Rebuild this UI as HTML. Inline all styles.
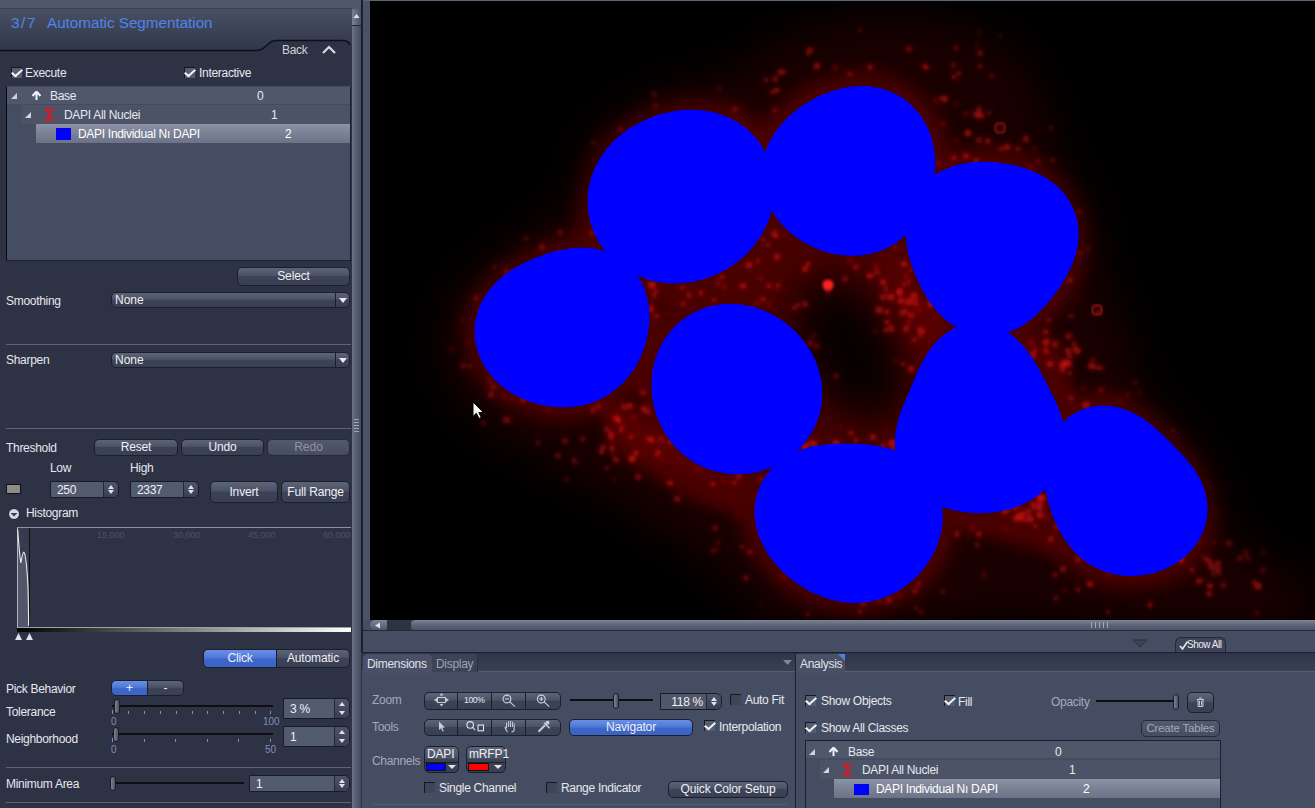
<!DOCTYPE html>
<html><head><meta charset="utf-8">
<style>
*{box-sizing:border-box;margin:0;padding:0}
html,body{width:1315px;height:808px;overflow:hidden;background:#2d3245;font-family:"Liberation Sans",sans-serif;font-size:12px;color:#e6e8ef}
.a{position:absolute}
.t{position:absolute;white-space:nowrap;line-height:14px;letter-spacing:-0.3px}
.btn{position:absolute;border:1px solid #1b1f2b;border-radius:5px;background:linear-gradient(#5d6478 0%,#4b5266 45%,#3d4356 50%,#3a4053 100%);color:#eef0f5;text-align:center;white-space:nowrap;letter-spacing:-0.15px}
.btnd{position:absolute;border:1px solid #252a38;border-radius:5px;background:linear-gradient(#535a6d 0%,#4d5367 50%,#474d60 100%);color:#8d93a3;text-align:center;white-space:nowrap}
.blue{background:linear-gradient(#6a90e6 0%,#4f78d8 45%,#3e66c9 55%,#3c63c6 100%)}
.dd{position:absolute;border:1px solid #1b1f2b;border-radius:5px;background:linear-gradient(#5d6478 0%,#4b5266 45%,#3d4356 50%,#3a4053 100%);color:#eef0f5;padding-left:3px;line-height:14px}
.dd i{position:absolute;right:0;top:0;bottom:0;width:14px;border-left:1px solid #1b1f2b}
.dd i:after{content:"";position:absolute;left:3px;top:5px;border-left:4px solid transparent;border-right:4px solid transparent;border-top:5px solid #e8eaf0}
.spin{position:absolute;border:1px solid #181b26;border-radius:0 6px 6px 0;background:#525a6e;color:#eef0f5}
.spin b{position:absolute;right:0;top:0;bottom:0;width:15px;border-left:1px solid #22263a;border-radius:0 6px 6px 0;background:linear-gradient(#4e5568,#3a4053)}
.spin b:before{content:"";position:absolute;left:4px;top:3px;border-left:3px solid transparent;border-right:3px solid transparent;border-bottom:4px solid #e0e3ea}
.spin b:after{content:"";position:absolute;left:4px;bottom:3px;border-left:3px solid transparent;border-right:3px solid transparent;border-top:4px solid #e0e3ea}
.cb{position:absolute;width:11px;height:11px;border-top:1px solid #14171f;border-left:1px solid #14171f;background:#565d71}
.cb.on:after{content:"";position:absolute;left:2px;top:-1px;width:4px;height:8px;border-right:2px solid #f4f5f8;border-bottom:2px solid #f4f5f8;transform:rotate(40deg) skewX(-8deg);transform-origin:50% 50%}
.sep{position:absolute;height:1px;background:#5e6578}
.lab{color:#a3aabb}
</style></head><body>
<!-- LEFT PANEL -->
<div class="a" style="left:0;top:0;width:352px;height:808px;background:#2d3245"></div>
<div class="a" style="left:0;top:0;width:352px;height:8px;background:#50576a"></div>
<div class="a" style="left:0;top:8px;width:352px;height:1px;background:#3c4254"></div>
<div class="a" style="left:0;top:9px;width:352px;height:42px;background:linear-gradient(#4a5064,#30364a)"></div>
<svg class="a" style="left:0;top:38px" width="352" height="16"><path d="M0 12.5 H257 C266 12.5 267 2.5 276 2.5 H342 Q349 2.5 350 7 V16 H0Z" fill="#2d3245"/><path d="M0 12.5 H257 C266 12.5 267 2.5 276 2.5 H342 Q349 2.5 350 7" fill="none" stroke="#0e1017" stroke-width="1.5"/></svg>
<div class="t" style="left:11px;top:14px;font-size:15.5px;line-height:18px;color:#4d84ea;letter-spacing:1.5px">3/7</div><div class="t" style="left:47px;top:14px;font-size:15.3px;line-height:18px;color:#4d84ea;letter-spacing:-0.05px">Automatic Segmentation</div>
<div class="t" style="left:282px;top:43px;color:#cdd1dc">Back</div>
<svg class="a" style="left:321px;top:44px" width="16" height="11"><path d="M2 9 L8 3 L14 9" fill="none" stroke="#d8dbe4" stroke-width="2.2"/></svg>

<div class="cb on" style="left:11px;top:67px"></div>
<div class="t" style="left:25px;top:66px">Execute</div>
<div class="cb on" style="left:184px;top:67px"></div>
<div class="t" style="left:199px;top:66px">Interactive</div>

<!-- tree -->
<div class="a" style="left:6px;top:86px;width:345px;height:175px;background:#454d62;border:1px solid #1c202c;border-left-color:#08090d;border-top-color:#454d62"></div>
<div class="a" style="left:7px;top:87px;width:343px;height:18px;background:#50576b;border-bottom:1px solid #454b5e"></div>
<div class="a" style="left:22px;top:105px;width:328px;height:19px;background:#4c5367"></div>
<div class="a" style="left:36px;top:124px;width:314px;height:19px;background:linear-gradient(#8d93a5,#7a8195 50%,#6c7387)"></div>
<svg class="a" style="left:10px;top:91px" width="8" height="9"><path d="M1 8 L7 8 L7 2Z" fill="#d0d4de"/></svg>
<svg class="a" style="left:31px;top:90px" width="11" height="11"><path d="M5.5 1.5 L1.5 6 M5.5 1.5 L9.5 6 M5.5 2 V10" fill="none" stroke="#f0f2f6" stroke-width="2"/></svg>
<div class="t" style="left:50px;top:89px">Base</div>
<div class="t" style="left:257px;top:89px">0</div>
<svg class="a" style="left:24px;top:110px" width="8" height="9"><path d="M1 8 L7 8 L7 2Z" fill="#d0d4de"/></svg>
<svg class="a" style="left:44px;top:107px" width="12" height="15"><path d="M10.5 2.5 H2 L7 7.5 L2 12.5 H10.5" fill="none" stroke="#e8141a" stroke-width="1.8"/></svg>
<div class="t" style="left:64px;top:108px">DAPI All Nuclei</div>
<div class="t" style="left:271px;top:108px">1</div>
<div class="a" style="left:56px;top:128px;width:15px;height:12px;background:#0000ff"></div>
<div class="t" style="left:78px;top:127px;color:#fff">DAPI Individual Nı DAPI</div>
<div class="t" style="left:285px;top:127px;color:#fff">2</div>

<div class="btn" style="left:237px;top:267px;width:113px;height:19px;line-height:16px">Select</div>
<div class="t" style="left:6px;top:294px">Smoothing</div>
<div class="dd" style="left:111px;top:292px;width:239px;height:16px">None<i></i></div>
<div class="sep" style="left:6px;top:344px;width:345px"></div>
<div class="t" style="left:6px;top:353px">Sharpen</div>
<div class="dd" style="left:111px;top:352px;width:239px;height:16px">None<i></i></div>
<div class="sep" style="left:6px;top:428px;width:345px"></div>

<div class="t" style="left:6px;top:441px">Threshold</div>
<div class="btn" style="left:94px;top:439px;width:84px;height:17px;line-height:15px">Reset</div>
<div class="btn" style="left:181px;top:439px;width:83px;height:17px;line-height:15px">Undo</div>
<div class="btnd" style="left:267px;top:439px;width:83px;height:17px;line-height:15px">Redo</div>
<div class="t" style="left:50px;top:461px">Low</div>
<div class="t" style="left:130px;top:461px">High</div>
<div class="a" style="left:6px;top:484px;width:15px;height:10px;background:#8c8c8c;border:1px solid #111"></div>
<div class="spin" style="left:50px;top:481px;width:69px;height:17px"><span class="t" style="left:6px;top:1px">250</span><b></b></div>
<div class="spin" style="left:130px;top:481px;width:69px;height:17px"><span class="t" style="left:6px;top:1px">2337</span><b></b></div>
<div class="btn" style="left:210px;top:481px;width:68px;height:22px;line-height:20px">Invert</div>
<div class="btn" style="left:281px;top:481px;width:69px;height:22px;line-height:20px">Full Range</div>
<svg class="a" style="left:7px;top:507px" width="14" height="14"><circle cx="7" cy="7" r="5.5" fill="#d6d9e1" stroke="#1c202b" stroke-width="1"/><path d="M3.5 6 H10.5 L7 9.5Z" fill="#3a4053"/></svg>
<div class="t" style="left:26px;top:506px">Histogram</div>

<!-- histogram -->
<div class="a" style="left:17px;top:527px;width:334px;height:101px;background:#2d3245;border-top:1px solid #8d93a3;border-left:1px solid #b0b5c2"></div>
<div class="a" style="left:18px;top:528px;width:11px;height:99px;background:#363c4f"></div>
<div class="a" style="left:29px;top:528px;width:1px;height:99px;background:#111"></div>
<svg class="a" style="left:17px;top:527px" width="334" height="101">
<g stroke="#30364a" stroke-width="1"><path d="M77.5 1 V100 M153.5 1 V100 M228.5 1 V100 M304.5 1 V100 M13 21.5 H334 M13 41.5 H334 M13 60.5 H334 M13 80.5 H334"/></g>
<g fill="#4c5366" font-family="Liberation Sans" font-size="9"><text x="80" y="11">15,000</text><text x="156" y="11">30,000</text><text x="231" y="11">45,000</text><text x="306" y="11">60,000</text></g>
<path d="M1 2.5 C1.5 12 2.5 30 3.9 36 C4.8 30 5.8 25 6.8 25 C8.5 27 10 40 11 60 C11.5 80 11.6 90 11.6 100 H1Z" fill="#50576b"/><path d="M0.7 2.5 C1.5 12 2.5 30 3.9 36 C4.8 30 5.8 25 6.8 25 C8.5 27 10 40 11 60 C11.5 80 11.6 90 11.6 99" fill="none" stroke="#e8eaef" stroke-width="1.1"/>
</svg>
<div class="a" style="left:17px;top:627px;width:334px;height:1px;background:#9aa0ae"></div><div class="a" style="left:17px;top:628px;width:334px;height:4px;background:linear-gradient(90deg,#000,#fff)"></div>
<svg class="a" style="left:14px;top:632px" width="22" height="9"><path d="M1 8 L4.5 1 L8 8Z M12 8 L15.5 1 L19 8Z" fill="#e0e3ea"/></svg>

<div class="btn blue" style="left:203px;top:649px;width:74px;height:19px;line-height:17px;border-radius:5px 0 0 5px">Click</div>
<div class="btn" style="left:276px;top:649px;width:74px;height:19px;line-height:17px;border-radius:0 5px 5px 0">Automatic</div>

<div class="t" style="left:6px;top:682px">Pick Behavior</div>
<div class="btn blue" style="left:111px;top:680px;width:37px;height:16px;line-height:14px;border-radius:5px 0 0 5px">+</div>
<div class="btn" style="left:147px;top:680px;width:37px;height:16px;line-height:14px;border-radius:0 5px 5px 0">-</div>

<div class="t" style="left:6px;top:705px">Tolerance</div>
<div class="a" style="left:112px;top:705px;width:161px;height:2px;background:#0c0e14"></div>
<svg class="a" style="left:110px;top:709px" width="170" height="18"><g stroke="#8990a2"><path d="M2.5 1 V5 M18.5 2 V5 M34.5 2 V5 M50.5 2 V5 M66.5 2 V5 M82.5 2 V5 M97.5 2 V5 M113.5 2 V5 M129.5 2 V5 M145.5 2 V5 M160.5 2 V5"/></g><g fill="#7e8fb8" font-family="Liberation Sans" font-size="10"><text x="1" y="16">0</text><text x="153" y="16">100</text></g></svg>
<div class="a" style="left:114px;top:699px;width:6px;height:15px;border-radius:3px;background:linear-gradient(90deg,#7b8296,#4a5164);border:1px solid #1a1d28"></div>
<div class="spin" style="left:283px;top:698px;width:67px;height:21px"><span class="t" style="left:6px;top:3px">3 %</span><b></b></div>

<div class="t" style="left:6px;top:732px">Neighborhood</div>
<div class="a" style="left:112px;top:733px;width:161px;height:2px;background:#0c0e14"></div>
<svg class="a" style="left:110px;top:737px" width="170" height="18"><g stroke="#8990a2"><path d="M2.5 1 V5 M34.5 2 V5 M65.5 2 V5 M97.5 2 V5 M128.5 2 V5 M160.5 2 V5"/></g><g fill="#7e8fb8" font-family="Liberation Sans" font-size="10"><text x="1" y="16">0</text><text x="155" y="16">50</text></g></svg>
<div class="a" style="left:113px;top:727px;width:6px;height:15px;border-radius:3px;background:linear-gradient(90deg,#7b8296,#4a5164);border:1px solid #1a1d28"></div>
<div class="spin" style="left:283px;top:726px;width:67px;height:21px"><span class="t" style="left:6px;top:3px">1</span><b></b></div>
<div class="sep" style="left:6px;top:767px;width:345px"></div>

<div class="t" style="left:6px;top:777px">Minimum Area</div>
<div class="a" style="left:112px;top:782px;width:132px;height:2px;background:#0c0e14"></div>
<div class="a" style="left:110px;top:776px;width:6px;height:15px;border-radius:3px;background:linear-gradient(90deg,#7b8296,#4a5164);border:1px solid #1a1d28"></div>
<div class="spin" style="left:249px;top:775px;width:101px;height:17px"><span class="t" style="left:6px;top:1px">1</span><b></b></div>
<div class="sep" style="left:6px;top:802px;width:345px"></div>

<!-- left scrollbar -->
<div class="a" style="left:352px;top:9px;width:9px;height:799px;background:linear-gradient(90deg,#6d7488,#596075 40%,#434a5d)"></div>
<div class="a" style="left:352px;top:9px;width:9px;height:17px;border-radius:5px 5px 0 0;background:linear-gradient(90deg,#7a8195,#4a5165);border-bottom:1px solid #22263a"></div>
<svg class="a" style="left:352px;top:12px" width="9" height="8"><path d="M1.5 6 L4.5 2 L7.5 6Z" fill="#e0e3ea"/></svg>
<div class="a" style="left:352px;top:0;width:10px;height:9px;background:#50576a"></div>
<svg class="a" style="left:354px;top:419px" width="6" height="16"><g stroke="#a0a6b5"><path d="M0 0.5 H5 M0 3.5 H5 M0 6.5 H5 M0 9.5 H5 M0 12.5 H5"/></g></svg>
<div class="a" style="left:361px;top:0;width:2px;height:652px;background:#1c2030"></div>
<div class="a" style="left:363px;top:0;width:7px;height:652px;background:#4b5266"></div>

<!-- IMAGE VIEW -->
<div class="a" style="left:363px;top:0;width:952px;height:1px;background:#5d6478"></div>
<div id="img" class="a" style="left:370px;top:1px;width:945px;height:619px;background:#000;overflow:hidden"><svg width="945" height="619" style="position:absolute;left:0;top:0">
<defs>
<filter id="bl1" x="-30%" y="-30%" width="160%" height="160%"><feGaussianBlur stdDeviation="22"/></filter>
<filter id="bl2" x="-30%" y="-30%" width="160%" height="160%"><feGaussianBlur stdDeviation="9"/></filter>
<filter id="bl4" x="-30%" y="-30%" width="160%" height="160%"><feGaussianBlur stdDeviation="7"/></filter>
<filter id="bl3"><feGaussianBlur stdDeviation="1.4"/></filter><filter id="bl5" x="-10%" y="-10%" width="120%" height="120%"><feGaussianBlur stdDeviation="2.2"/></filter>
<mask id="cell" maskUnits="userSpaceOnUse" x="0" y="0" width="1400" height="700"><polygon points="440,360 455,290 520,240 575,205 590,140 650,95 730,75 790,35 860,18 950,22 1020,55 1050,120 1060,165 1088,205 1100,270 1125,330 1140,390 1175,425 1212,475 1225,535 1275,565 1315,595 1315,630 1200,630 1100,625 1000,615 950,625 860,630 770,625 710,560 610,495 480,425" fill="#fff" filter="url(#bl1)"/></mask>
</defs>
<g transform="translate(-370,-1)">
<g mask="url(#cell)">
<rect x="370" y="0" width="945" height="640" fill="#1a0000"/>
<g fill="#4c0000" stroke="#4c0000" stroke-width="26" filter="url(#bl2)"><polygon points="774.3,195.9 773.6,202.1 772.4,208.2 770.8,214.2 768.8,220.0 766.5,225.6 763.8,231.1 760.7,236.3 757.4,241.3 753.7,246.0 749.8,250.5 745.7,254.7 741.3,258.7 736.7,262.4 731.9,265.8 727.0,268.9 721.8,271.8 716.5,274.4 711.0,276.6 705.4,278.6 699.7,280.2 693.8,281.5 687.8,282.5 681.8,283.1 675.6,283.4 669.4,283.2 663.2,282.6 656.9,281.7 650.7,280.3 644.6,278.4 638.5,276.1 632.6,273.4 626.8,270.1 621.3,266.5 616.0,262.3 611.1,257.8 606.5,252.8 602.3,247.5 598.6,241.8 595.4,235.7 592.7,229.5 590.5,223.0 588.9,216.3 587.9,209.5 587.5,202.7 587.7,195.9 588.5,189.2 589.8,182.6 591.6,176.1 594.0,169.9 596.8,163.9 600.1,158.2 603.7,152.8 607.7,147.7 611.9,143.0 616.4,138.6 621.2,134.5 626.1,130.7 631.2,127.3 636.4,124.2 641.8,121.4 647.3,118.9 652.8,116.7 658.5,114.8 664.2,113.2 670.0,111.9 675.9,110.8 681.8,110.1 687.8,109.8 693.9,109.8 699.9,110.1 706.0,110.9 712.1,112.0 718.1,113.6 724.0,115.7 729.7,118.1 735.3,121.1 740.7,124.4 745.8,128.2 750.6,132.4 755.0,137.0 759.0,142.0 762.7,147.3 765.8,152.8 768.5,158.6 770.7,164.6 772.5,170.8 773.7,177.0 774.4,183.3 774.6,189.6"/>
<polygon points="935.1,170.2 934.6,176.0 933.8,181.7 932.7,187.4 931.2,193.0 929.5,198.5 927.4,203.9 925.1,209.2 922.4,214.3 919.3,219.3 915.9,224.1 912.2,228.6 908.2,232.9 903.9,236.9 899.2,240.6 894.3,243.9 889.1,246.9 883.8,249.4 878.2,251.5 872.5,253.2 866.6,254.5 860.7,255.4 854.7,255.8 848.8,255.7 842.8,255.3 836.9,254.5 831.0,253.3 825.3,251.8 819.6,249.9 814.0,247.6 808.6,245.0 803.3,242.1 798.2,238.8 793.3,235.2 788.6,231.2 784.2,226.9 780.0,222.3 776.2,217.4 772.8,212.2 769.8,206.7 767.2,201.0 765.1,195.1 763.5,189.0 762.5,182.7 762.0,176.5 762.1,170.2 762.7,164.0 763.8,157.8 765.5,151.9 767.7,146.1 770.2,140.5 773.2,135.2 776.6,130.2 780.2,125.5 784.1,121.1 788.3,116.9 792.6,113.1 797.1,109.5 801.7,106.1 806.4,103.0 811.3,100.2 816.3,97.5 821.4,95.1 826.7,93.0 832.0,91.0 837.5,89.4 843.1,88.0 848.8,86.9 854.7,86.3 860.6,86.0 866.6,86.1 872.6,86.7 878.5,87.7 884.4,89.3 890.2,91.4 895.8,94.0 901.1,97.0 906.2,100.6 910.9,104.5 915.2,108.9 919.2,113.6 922.7,118.7 925.8,124.0 928.4,129.5 930.6,135.1 932.3,140.9 933.7,146.7 934.6,152.6 935.1,158.5 935.3,164.4"/>
<polygon points="1077.5,247.1 1076.2,253.0 1074.4,258.6 1072.4,264.1 1070.0,269.4 1067.5,274.5 1064.7,279.4 1061.8,284.1 1058.8,288.7 1055.6,293.1 1052.3,297.5 1048.9,301.8 1045.2,306.0 1041.4,310.1 1037.4,314.1 1033.1,317.9 1028.5,321.5 1023.6,324.9 1018.5,327.9 1013.0,330.5 1007.3,332.7 1001.4,334.4 995.3,335.5 989.1,335.9 982.9,335.8 976.7,335.0 970.6,333.6 964.8,331.6 959.1,329.0 953.8,325.9 948.7,322.4 944.0,318.5 939.7,314.3 935.7,309.8 932.1,305.2 928.7,300.4 925.6,295.5 922.8,290.5 920.1,285.4 917.7,280.3 915.4,275.0 913.3,269.7 911.4,264.3 909.7,258.7 908.2,253.0 907.0,247.1 906.2,241.1 905.7,234.9 905.7,228.7 906.2,222.4 907.2,216.2 908.8,210.0 911.0,203.9 913.8,198.1 917.1,192.5 921.0,187.4 925.4,182.6 930.3,178.3 935.5,174.5 941.1,171.2 946.8,168.5 952.8,166.2 958.8,164.5 965.0,163.2 971.1,162.3 977.2,161.8 983.2,161.7 989.2,161.8 995.2,162.2 1001.1,162.9 1006.9,163.8 1012.7,164.9 1018.5,166.3 1024.2,168.0 1029.8,169.9 1035.4,172.2 1040.9,174.9 1046.2,178.0 1051.3,181.4 1056.2,185.3 1060.7,189.6 1064.8,194.3 1068.5,199.4 1071.6,204.9 1074.2,210.6 1076.2,216.5 1077.6,222.6 1078.4,228.8 1078.7,234.9 1078.3,241.1"/>
<polygon points="649.1,326.2 648.3,331.8 647.3,337.2 645.9,342.6 644.3,347.8 642.4,352.9 640.2,357.9 637.7,362.8 635.0,367.5 632.0,372.0 628.7,376.4 625.2,380.5 621.4,384.5 617.3,388.1 613.0,391.5 608.4,394.6 603.7,397.4 598.7,399.9 593.5,402.0 588.3,403.7 582.8,405.2 577.3,406.2 571.7,406.9 566.1,407.3 560.4,407.3 554.7,407.0 549.0,406.3 543.2,405.3 537.5,404.0 531.8,402.3 526.2,400.3 520.6,397.9 515.1,395.1 509.8,391.9 504.6,388.3 499.7,384.3 495.0,379.9 490.7,375.1 486.8,369.9 483.3,364.3 480.4,358.4 478.0,352.3 476.2,345.9 475.1,339.4 474.6,332.8 474.8,326.2 475.7,319.7 477.2,313.3 479.3,307.2 482.0,301.3 485.2,295.7 488.8,290.5 492.8,285.7 497.0,281.3 501.6,277.3 506.2,273.6 511.0,270.3 515.9,267.3 520.8,264.6 525.7,262.1 530.6,259.9 535.6,257.8 540.5,255.9 545.5,254.1 550.6,252.6 555.7,251.1 560.9,249.9 566.2,248.9 571.7,248.1 577.2,247.7 582.8,247.5 588.5,247.8 594.2,248.5 599.9,249.7 605.5,251.3 610.9,253.5 616.2,256.1 621.2,259.3 626.0,262.9 630.3,266.9 634.3,271.4 637.8,276.2 640.9,281.3 643.5,286.6 645.6,292.1 647.2,297.7 648.4,303.4 649.2,309.2 649.5,314.9 649.5,320.6"/>
<polygon points="822.2,392.4 822.0,398.6 821.4,404.8 820.2,411.0 818.6,417.0 816.5,422.9 813.9,428.6 810.9,434.0 807.5,439.2 803.7,444.0 799.6,448.6 795.2,452.8 790.5,456.7 785.5,460.2 780.4,463.3 775.1,466.0 769.6,468.3 764.0,470.3 758.4,471.9 752.7,473.0 746.9,473.8 741.2,474.2 735.4,474.3 729.7,473.9 724.1,473.2 718.5,472.1 713.0,470.7 707.7,468.9 702.5,466.7 697.5,464.2 692.7,461.4 688.1,458.3 683.7,454.9 679.5,451.3 675.6,447.3 672.0,443.2 668.6,438.8 665.5,434.2 662.8,429.5 660.3,424.5 658.1,419.5 656.2,414.3 654.6,408.9 653.3,403.5 652.3,398.0 651.7,392.4 651.4,386.7 651.5,381.0 652.0,375.2 652.8,369.5 654.0,363.8 655.6,358.1 657.7,352.5 660.1,347.1 663.0,341.8 666.2,336.7 669.9,331.9 674.0,327.3 678.4,323.1 683.2,319.2 688.3,315.7 693.7,312.6 699.3,310.0 705.1,307.8 711.0,306.1 717.1,304.9 723.3,304.1 729.5,303.8 735.6,304.0 741.8,304.6 747.8,305.7 753.8,307.1 759.6,309.0 765.3,311.2 770.9,313.8 776.2,316.7 781.4,320.0 786.3,323.5 791.0,327.4 795.5,331.6 799.7,336.0 803.6,340.7 807.2,345.7 810.5,350.9 813.4,356.3 816.0,362.0 818.1,367.8 819.8,373.8 821.1,379.9 821.9,386.1"/>
<polygon points="1061.5,416.8 1063.1,422.8 1064.4,429.1 1065.2,435.6 1065.4,442.2 1065.0,448.8 1063.9,455.5 1062.2,462.1 1059.8,468.5 1056.7,474.7 1052.9,480.5 1048.6,485.9 1043.7,490.8 1038.4,495.3 1032.6,499.2 1026.6,502.6 1020.3,505.5 1013.9,507.9 1007.3,509.8 1000.6,511.3 993.9,512.3 987.2,512.9 980.4,513.2 973.7,513.0 967.0,512.5 960.4,511.6 953.8,510.2 947.3,508.5 940.9,506.3 934.7,503.6 928.8,500.5 923.1,496.8 917.8,492.7 912.9,488.1 908.5,483.0 904.7,477.5 901.5,471.7 898.9,465.7 896.9,459.4 895.7,453.1 895.0,446.7 894.9,440.4 895.4,434.2 896.3,428.2 897.6,422.4 899.2,416.8 901.0,411.5 902.9,406.4 904.9,401.5 906.9,396.7 908.9,392.0 910.9,387.4 912.9,382.7 914.9,378.0 916.9,373.1 919.1,368.2 921.6,363.2 924.3,358.2 927.3,353.2 930.8,348.2 934.7,343.4 939.0,338.9 943.9,334.7 949.2,331.1 954.9,328.0 961.0,325.6 967.3,324.0 973.8,323.1 980.3,323.1 986.8,323.8 993.2,325.4 999.3,327.7 1005.1,330.6 1010.5,334.1 1015.5,338.1 1020.0,342.4 1024.2,347.0 1027.9,351.8 1031.3,356.6 1034.4,361.5 1037.3,366.3 1040.0,371.1 1042.6,375.9 1045.1,380.6 1047.6,385.4 1050.1,390.2 1052.6,395.2 1055.0,400.3 1057.4,405.5 1059.6,411.1"/>
<polygon points="942.8,518.5 942.3,525.0 941.3,531.5 939.8,537.8 937.7,544.0 935.3,550.0 932.4,555.7 929.1,561.2 925.5,566.4 921.6,571.3 917.3,576.0 912.8,580.3 908.0,584.3 903.0,587.9 897.8,591.2 892.4,594.1 886.9,596.6 881.2,598.7 875.4,600.3 869.5,601.6 863.6,602.4 857.7,602.9 851.8,602.9 845.9,602.5 840.1,601.7 834.3,600.5 828.7,599.0 823.2,597.2 817.9,595.1 812.6,592.7 807.5,590.0 802.6,587.1 797.7,583.9 793.0,580.5 788.4,576.8 784.0,572.9 779.7,568.7 775.7,564.2 771.8,559.4 768.2,554.4 764.9,549.0 762.0,543.4 759.4,537.5 757.4,531.3 755.9,525.0 754.9,518.5 754.6,511.9 754.9,505.3 755.9,498.7 757.6,492.3 759.9,486.1 762.9,480.2 766.5,474.7 770.5,469.6 775.1,464.9 780.0,460.8 785.3,457.1 790.8,454.0 796.4,451.4 802.1,449.3 807.9,447.6 813.6,446.2 819.2,445.3 824.8,444.6 830.3,444.1 835.6,443.8 840.9,443.6 846.2,443.6 851.4,443.6 856.7,443.8 861.9,444.1 867.3,444.5 872.7,445.1 878.1,445.9 883.7,447.0 889.3,448.4 894.9,450.2 900.4,452.4 905.9,455.1 911.2,458.2 916.3,461.8 921.1,465.9 925.6,470.5 929.6,475.5 933.2,480.9 936.3,486.6 938.7,492.7 940.6,499.0 941.9,505.4 942.7,511.9"/>
<polygon points="1205.8,494.4 1206.9,500.2 1207.5,506.0 1207.5,512.0 1206.8,517.9 1205.7,523.8 1203.9,529.5 1201.5,535.1 1198.7,540.4 1195.3,545.4 1191.5,550.1 1187.3,554.5 1182.7,558.4 1177.9,562.0 1172.8,565.1 1167.5,567.9 1162.1,570.2 1156.5,572.1 1150.9,573.7 1145.2,574.8 1139.4,575.6 1133.7,575.9 1128.0,575.9 1122.3,575.5 1116.7,574.7 1111.2,573.5 1105.8,571.9 1100.6,570.0 1095.5,567.6 1090.7,565.0 1086.1,562.0 1081.8,558.7 1077.7,555.1 1073.9,551.3 1070.4,547.3 1067.2,543.1 1064.2,538.7 1061.4,534.2 1058.9,529.7 1056.6,525.0 1054.4,520.2 1052.5,515.3 1050.7,510.3 1049.0,505.1 1047.6,499.9 1046.3,494.4 1045.2,488.9 1044.5,483.1 1044.0,477.2 1043.8,471.1 1044.1,465.0 1044.9,458.7 1046.2,452.5 1048.0,446.3 1050.5,440.2 1053.5,434.4 1057.2,428.9 1061.5,423.7 1066.3,419.1 1071.6,415.1 1077.4,411.8 1083.5,409.1 1089.9,407.2 1096.4,406.0 1103.0,405.6 1109.5,405.9 1115.9,406.8 1122.1,408.4 1128.0,410.5 1133.7,413.0 1139.0,415.9 1143.9,419.1 1148.5,422.4 1152.8,425.9 1156.9,429.4 1160.7,432.9 1164.3,436.4 1167.8,439.8 1171.2,443.2 1174.6,446.7 1177.9,450.1 1181.3,453.6 1184.6,457.3 1187.9,461.1 1191.1,465.1 1194.2,469.3 1197.1,473.8 1199.8,478.6 1202.2,483.6 1204.2,488.9"/></g>
<g fill="#4a0000" filter="url(#bl4)">
<polygon points="640,250 780,240 905,225 960,320 900,440 820,440 660,300"/>
<polygon points="600,395 700,440 760,470 752,520 690,500 610,450"/>
<polygon points="930,480 1060,480 1070,560 1000,540 940,520"/>
<polygon points="1000,330 1060,340 1080,420 1040,420"/>
</g>
<g fill="#5a0000" filter="url(#bl4)" opacity="0.8">
<polygon points="880,250 930,300 950,330 920,380 880,330"/>
<polygon points="590,395 640,420 700,455 720,480 640,455"/>
</g>
<ellipse cx="850" cy="350" rx="48" ry="80" transform="rotate(-28 850 350)" fill="#000" fill-opacity="0.92" filter="url(#bl1)"/>
<g fill="#ff1818" filter="url(#bl5)"><circle cx="982" cy="114" r="2.4" fill-opacity="0.27"/><circle cx="476" cy="298" r="2.9" fill-opacity="0.46"/><circle cx="513" cy="398" r="2.0" fill-opacity="0.28"/><circle cx="713" cy="551" r="2.2" fill-opacity="0.59"/><circle cx="1090" cy="584" r="3.1" fill-opacity="0.60"/><circle cx="602" cy="452" r="2.0" fill-opacity="0.47"/><circle cx="683" cy="287" r="1.9" fill-opacity="0.40"/><circle cx="945" cy="99" r="3.0" fill-opacity="0.64"/><circle cx="956" cy="104" r="1.6" fill-opacity="0.61"/><circle cx="1056" cy="598" r="2.6" fill-opacity="0.44"/><circle cx="1229" cy="543" r="2.9" fill-opacity="0.60"/><circle cx="1080" cy="253" r="2.5" fill-opacity="0.43"/><circle cx="649" cy="439" r="2.6" fill-opacity="0.62"/><circle cx="1026" cy="139" r="2.9" fill-opacity="0.62"/><circle cx="1065" cy="590" r="1.9" fill-opacity="0.43"/><circle cx="1063" cy="362" r="2.9" fill-opacity="0.26"/><circle cx="655" cy="105" r="2.6" fill-opacity="0.43"/><circle cx="1181" cy="560" r="3.0" fill-opacity="0.64"/><circle cx="903" cy="364" r="2.5" fill-opacity="0.45"/><circle cx="937" cy="315" r="1.7" fill-opacity="0.47"/><circle cx="683" cy="304" r="2.3" fill-opacity="0.58"/><circle cx="984" cy="575" r="2.8" fill-opacity="0.26"/><circle cx="909" cy="282" r="2.3" fill-opacity="0.46"/><circle cx="979" cy="534" r="2.8" fill-opacity="0.57"/><circle cx="657" cy="456" r="1.8" fill-opacity="0.58"/><circle cx="885" cy="431" r="1.7" fill-opacity="0.29"/><circle cx="895" cy="361" r="1.9" fill-opacity="0.33"/><circle cx="1056" cy="527" r="2.3" fill-opacity="0.55"/><circle cx="775" cy="79" r="3.0" fill-opacity="0.47"/><circle cx="889" cy="600" r="3.2" fill-opacity="0.51"/><circle cx="814" cy="336" r="2.2" fill-opacity="0.36"/><circle cx="863" cy="604" r="2.4" fill-opacity="0.62"/><circle cx="1128" cy="395" r="2.0" fill-opacity="0.52"/><circle cx="1035" cy="350" r="2.2" fill-opacity="0.44"/><circle cx="634" cy="417" r="2.1" fill-opacity="0.54"/><circle cx="763" cy="239" r="2.2" fill-opacity="0.41"/><circle cx="523" cy="400" r="2.8" fill-opacity="0.51"/><circle cx="1063" cy="569" r="2.9" fill-opacity="0.52"/><circle cx="595" cy="143" r="2.1" fill-opacity="0.64"/><circle cx="549" cy="409" r="1.9" fill-opacity="0.27"/><circle cx="1218" cy="569" r="2.5" fill-opacity="0.63"/><circle cx="906" cy="329" r="3.2" fill-opacity="0.51"/><circle cx="974" cy="114" r="2.1" fill-opacity="0.35"/><circle cx="957" cy="534" r="2.9" fill-opacity="0.42"/><circle cx="920" cy="335" r="2.9" fill-opacity="0.37"/><circle cx="714" cy="300" r="2.2" fill-opacity="0.52"/><circle cx="737" cy="516" r="1.8" fill-opacity="0.29"/><circle cx="542" cy="247" r="2.9" fill-opacity="0.58"/><circle cx="924" cy="66" r="1.9" fill-opacity="0.64"/><circle cx="1088" cy="249" r="2.9" fill-opacity="0.26"/><circle cx="943" cy="124" r="2.0" fill-opacity="0.48"/><circle cx="483" cy="423" r="3.1" fill-opacity="0.49"/><circle cx="856" cy="267" r="2.7" fill-opacity="0.55"/><circle cx="1078" cy="560" r="2.6" fill-opacity="0.55"/><circle cx="956" cy="48" r="3.0" fill-opacity="0.37"/><circle cx="1248" cy="558" r="2.9" fill-opacity="0.39"/><circle cx="835" cy="67" r="2.1" fill-opacity="0.53"/><circle cx="620" cy="129" r="2.7" fill-opacity="0.57"/><circle cx="489" cy="380" r="2.0" fill-opacity="0.57"/><circle cx="783" cy="578" r="1.9" fill-opacity="0.47"/><circle cx="976" cy="161" r="2.8" fill-opacity="0.56"/><circle cx="945" cy="544" r="1.8" fill-opacity="0.26"/><circle cx="677" cy="499" r="3.1" fill-opacity="0.48"/><circle cx="656" cy="108" r="1.7" fill-opacity="0.38"/><circle cx="1108" cy="612" r="2.3" fill-opacity="0.55"/><circle cx="817" cy="66" r="3.2" fill-opacity="0.56"/><circle cx="1051" cy="539" r="3.0" fill-opacity="0.44"/><circle cx="592" cy="142" r="2.3" fill-opacity="0.37"/><circle cx="761" cy="479" r="3.1" fill-opacity="0.26"/><circle cx="731" cy="482" r="1.7" fill-opacity="0.41"/><circle cx="817" cy="346" r="2.7" fill-opacity="0.35"/><circle cx="1150" cy="605" r="2.7" fill-opacity="0.62"/><circle cx="798" cy="305" r="2.7" fill-opacity="0.35"/><circle cx="805" cy="269" r="2.9" fill-opacity="0.60"/><circle cx="762" cy="606" r="1.9" fill-opacity="0.34"/><circle cx="1038" cy="161" r="2.5" fill-opacity="0.41"/><circle cx="657" cy="316" r="2.5" fill-opacity="0.50"/><circle cx="750" cy="552" r="2.7" fill-opacity="0.53"/><circle cx="697" cy="469" r="2.0" fill-opacity="0.35"/><circle cx="538" cy="443" r="2.3" fill-opacity="0.56"/><circle cx="1199" cy="542" r="2.0" fill-opacity="0.45"/><circle cx="739" cy="476" r="2.9" fill-opacity="0.48"/><circle cx="814" cy="444" r="2.9" fill-opacity="0.57"/><circle cx="558" cy="246" r="2.0" fill-opacity="0.32"/><circle cx="1257" cy="613" r="2.7" fill-opacity="0.30"/><circle cx="1083" cy="616" r="2.1" fill-opacity="0.26"/><circle cx="919" cy="310" r="2.1" fill-opacity="0.57"/><circle cx="667" cy="313" r="2.1" fill-opacity="0.26"/><circle cx="470" cy="366" r="2.2" fill-opacity="0.40"/><circle cx="1018" cy="506" r="2.6" fill-opacity="0.39"/><circle cx="574" cy="230" r="1.6" fill-opacity="0.45"/><circle cx="915" cy="591" r="3.0" fill-opacity="0.38"/><circle cx="1007" cy="147" r="3.0" fill-opacity="0.59"/><circle cx="836" cy="376" r="3.1" fill-opacity="0.31"/><circle cx="766" cy="80" r="2.2" fill-opacity="0.60"/><circle cx="620" cy="421" r="1.6" fill-opacity="0.39"/><circle cx="1051" cy="128" r="2.7" fill-opacity="0.44"/><circle cx="506" cy="271" r="2.3" fill-opacity="0.63"/><circle cx="1031" cy="167" r="1.8" fill-opacity="0.61"/><circle cx="526" cy="238" r="2.8" fill-opacity="0.52"/><circle cx="763" cy="299" r="2.7" fill-opacity="0.49"/><circle cx="850" cy="261" r="1.9" fill-opacity="0.65"/><circle cx="594" cy="409" r="2.8" fill-opacity="0.35"/><circle cx="914" cy="340" r="2.9" fill-opacity="0.37"/><circle cx="941" cy="98" r="2.4" fill-opacity="0.37"/><circle cx="808" cy="53" r="2.3" fill-opacity="0.47"/><circle cx="904" cy="264" r="3.0" fill-opacity="0.64"/><circle cx="1006" cy="529" r="2.3" fill-opacity="0.28"/><circle cx="760" cy="278" r="1.7" fill-opacity="0.58"/><circle cx="1098" cy="312" r="2.3" fill-opacity="0.64"/><circle cx="491" cy="395" r="3.1" fill-opacity="0.51"/><circle cx="1101" cy="368" r="2.8" fill-opacity="0.42"/><circle cx="777" cy="289" r="1.8" fill-opacity="0.38"/><circle cx="1026" cy="349" r="1.8" fill-opacity="0.37"/><circle cx="809" cy="342" r="1.8" fill-opacity="0.60"/><circle cx="957" cy="141" r="1.9" fill-opacity="0.39"/><circle cx="1053" cy="160" r="2.8" fill-opacity="0.48"/><circle cx="1070" cy="280" r="2.5" fill-opacity="0.64"/><circle cx="715" cy="528" r="2.7" fill-opacity="0.48"/><circle cx="468" cy="342" r="2.1" fill-opacity="0.35"/><circle cx="718" cy="543" r="2.7" fill-opacity="0.28"/><circle cx="870" cy="67" r="2.5" fill-opacity="0.64"/><circle cx="936" cy="101" r="2.1" fill-opacity="0.53"/><circle cx="899" cy="596" r="1.8" fill-opacity="0.60"/><circle cx="1046" cy="332" r="2.8" fill-opacity="0.57"/><circle cx="808" cy="614" r="2.2" fill-opacity="0.61"/><circle cx="462" cy="319" r="1.7" fill-opacity="0.62"/><circle cx="746" cy="578" r="2.7" fill-opacity="0.63"/><circle cx="772" cy="92" r="3.1" fill-opacity="0.28"/><circle cx="1108" cy="575" r="1.9" fill-opacity="0.38"/><circle cx="972" cy="528" r="1.9" fill-opacity="0.63"/><circle cx="770" cy="304" r="2.1" fill-opacity="0.39"/><circle cx="811" cy="344" r="2.1" fill-opacity="0.62"/><circle cx="895" cy="247" r="2.4" fill-opacity="0.36"/><circle cx="850" cy="74" r="2.4" fill-opacity="0.51"/><circle cx="1043" cy="498" r="2.9" fill-opacity="0.57"/><circle cx="506" cy="420" r="3.2" fill-opacity="0.60"/><circle cx="558" cy="456" r="3.0" fill-opacity="0.56"/><circle cx="648" cy="412" r="2.7" fill-opacity="0.46"/><circle cx="902" cy="313" r="3.0" fill-opacity="0.46"/><circle cx="952" cy="165" r="1.7" fill-opacity="0.27"/><circle cx="808" cy="264" r="2.4" fill-opacity="0.63"/><circle cx="614" cy="480" r="1.8" fill-opacity="0.47"/><circle cx="1079" cy="212" r="2.6" fill-opacity="0.53"/><circle cx="845" cy="279" r="2.4" fill-opacity="0.63"/><circle cx="860" cy="30" r="2.2" fill-opacity="0.44"/><circle cx="828" cy="292" r="2.6" fill-opacity="0.41"/><circle cx="713" cy="484" r="2.4" fill-opacity="0.60"/><circle cx="916" cy="608" r="2.7" fill-opacity="0.26"/><circle cx="1096" cy="367" r="2.7" fill-opacity="0.47"/><circle cx="921" cy="612" r="2.8" fill-opacity="0.38"/><circle cx="1078" cy="590" r="2.5" fill-opacity="0.46"/><circle cx="943" cy="592" r="2.8" fill-opacity="0.28"/><circle cx="1047" cy="517" r="2.0" fill-opacity="0.39"/><circle cx="1205" cy="580" r="1.9" fill-opacity="0.30"/><circle cx="873" cy="437" r="2.9" fill-opacity="0.59"/><circle cx="742" cy="547" r="2.4" fill-opacity="0.38"/><circle cx="643" cy="392" r="3.1" fill-opacity="0.39"/><circle cx="1214" cy="543" r="2.2" fill-opacity="0.34"/><circle cx="954" cy="77" r="2.2" fill-opacity="0.64"/><circle cx="969" cy="537" r="1.8" fill-opacity="0.26"/><circle cx="1049" cy="320" r="2.2" fill-opacity="0.45"/><circle cx="1139" cy="392" r="1.9" fill-opacity="0.60"/><circle cx="1173" cy="430" r="2.8" fill-opacity="0.43"/><circle cx="920" cy="329" r="3.0" fill-opacity="0.46"/><circle cx="1018" cy="149" r="2.8" fill-opacity="0.38"/><circle cx="878" cy="601" r="2.0" fill-opacity="0.62"/><circle cx="1071" cy="316" r="2.4" fill-opacity="0.40"/><circle cx="909" cy="49" r="3.2" fill-opacity="0.40"/><circle cx="735" cy="109" r="3.1" fill-opacity="0.32"/><circle cx="939" cy="163" r="2.8" fill-opacity="0.28"/><circle cx="780" cy="72" r="3.0" fill-opacity="0.49"/><circle cx="623" cy="404" r="1.9" fill-opacity="0.46"/><circle cx="775" cy="110" r="2.4" fill-opacity="0.41"/><circle cx="919" cy="584" r="2.2" fill-opacity="0.53"/><circle cx="1055" cy="575" r="2.2" fill-opacity="0.59"/><circle cx="504" cy="397" r="2.1" fill-opacity="0.49"/><circle cx="651" cy="309" r="3.0" fill-opacity="0.62"/><circle cx="983" cy="117" r="2.3" fill-opacity="0.32"/><circle cx="1120" cy="400" r="1.6" fill-opacity="0.44"/><circle cx="891" cy="326" r="1.8" fill-opacity="0.49"/><circle cx="701" cy="293" r="2.9" fill-opacity="0.41"/><circle cx="794" cy="308" r="3.2" fill-opacity="0.27"/><circle cx="1034" cy="148" r="2.6" fill-opacity="0.27"/><circle cx="630" cy="406" r="3.1" fill-opacity="0.63"/><circle cx="1079" cy="298" r="1.8" fill-opacity="0.32"/><circle cx="1035" cy="526" r="2.6" fill-opacity="0.35"/><circle cx="777" cy="90" r="2.6" fill-opacity="0.61"/><circle cx="1135" cy="382" r="2.3" fill-opacity="0.49"/><circle cx="718" cy="283" r="2.5" fill-opacity="0.36"/><circle cx="451" cy="349" r="3.0" fill-opacity="0.28"/><circle cx="911" cy="369" r="3.2" fill-opacity="0.58"/><circle cx="560" cy="232" r="2.6" fill-opacity="0.54"/><circle cx="785" cy="236" r="1.7" fill-opacity="0.42"/><circle cx="723" cy="481" r="2.1" fill-opacity="0.43"/><circle cx="757" cy="303" r="2.0" fill-opacity="0.57"/><circle cx="662" cy="459" r="2.0" fill-opacity="0.28"/><circle cx="494" cy="267" r="2.2" fill-opacity="0.48"/><circle cx="1101" cy="390" r="3.1" fill-opacity="0.27"/><circle cx="716" cy="550" r="2.0" fill-opacity="0.54"/><circle cx="1210" cy="486" r="1.7" fill-opacity="0.53"/><circle cx="479" cy="308" r="1.8" fill-opacity="0.60"/><circle cx="805" cy="304" r="2.6" fill-opacity="0.63"/><circle cx="840" cy="428" r="1.8" fill-opacity="0.25"/><circle cx="1083" cy="388" r="2.1" fill-opacity="0.28"/><circle cx="511" cy="421" r="1.9" fill-opacity="0.37"/><circle cx="1219" cy="573" r="2.9" fill-opacity="0.29"/><circle cx="953" cy="65" r="3.1" fill-opacity="0.30"/><circle cx="1070" cy="336" r="2.9" fill-opacity="0.27"/><circle cx="1217" cy="511" r="2.3" fill-opacity="0.26"/><circle cx="735" cy="483" r="2.3" fill-opacity="0.46"/><circle cx="493" cy="387" r="3.1" fill-opacity="0.37"/><circle cx="877" cy="272" r="3.1" fill-opacity="0.38"/><circle cx="977" cy="545" r="2.7" fill-opacity="0.34"/><circle cx="810" cy="50" r="3.1" fill-opacity="0.59"/><circle cx="1078" cy="585" r="1.6" fill-opacity="0.30"/><circle cx="1040" cy="505" r="3.1" fill-opacity="0.58"/><circle cx="860" cy="612" r="2.3" fill-opacity="0.60"/><circle cx="1213" cy="574" r="2.6" fill-opacity="0.28"/><circle cx="463" cy="366" r="2.6" fill-opacity="0.61"/><circle cx="719" cy="88" r="2.6" fill-opacity="0.35"/><circle cx="923" cy="331" r="2.5" fill-opacity="0.52"/><circle cx="654" cy="94" r="3.0" fill-opacity="0.63"/><circle cx="898" cy="292" r="2.9" fill-opacity="0.28"/><circle cx="599" cy="406" r="2.6" fill-opacity="0.44"/><circle cx="851" cy="433" r="2.8" fill-opacity="0.48"/><circle cx="783" cy="72" r="2.5" fill-opacity="0.54"/><circle cx="603" cy="447" r="2.4" fill-opacity="0.65"/><circle cx="592" cy="233" r="3.0" fill-opacity="0.30"/><circle cx="916" cy="303" r="2.9" fill-opacity="0.49"/><circle cx="892" cy="329" r="2.9" fill-opacity="0.46"/><circle cx="909" cy="323" r="2.1" fill-opacity="0.61"/><circle cx="904" cy="284" r="2.2" fill-opacity="0.44"/><circle cx="900" cy="293" r="2.9" fill-opacity="0.46"/><circle cx="914" cy="296" r="3.2" fill-opacity="0.67"/><circle cx="886" cy="330" r="2.8" fill-opacity="0.48"/><circle cx="887" cy="312" r="2.7" fill-opacity="0.62"/><circle cx="887" cy="322" r="2.4" fill-opacity="0.70"/><circle cx="900" cy="291" r="2.9" fill-opacity="0.56"/><circle cx="909" cy="302" r="3.4" fill-opacity="0.65"/><circle cx="875" cy="331" r="2.0" fill-opacity="0.37"/><circle cx="870" cy="276" r="2.7" fill-opacity="0.69"/><circle cx="869" cy="275" r="2.0" fill-opacity="0.37"/><circle cx="891" cy="297" r="3.5" fill-opacity="0.61"/><circle cx="931" cy="304" r="3.4" fill-opacity="0.62"/><circle cx="886" cy="289" r="2.7" fill-opacity="0.39"/><circle cx="883" cy="297" r="3.2" fill-opacity="0.46"/><circle cx="911" cy="270" r="2.4" fill-opacity="0.42"/><circle cx="905" cy="311" r="2.3" fill-opacity="0.63"/><circle cx="911" cy="315" r="3.5" fill-opacity="0.48"/><circle cx="906" cy="276" r="2.1" fill-opacity="0.61"/><circle cx="876" cy="266" r="2.1" fill-opacity="0.57"/><circle cx="883" cy="282" r="3.2" fill-opacity="0.53"/><circle cx="879" cy="310" r="3.5" fill-opacity="0.60"/><circle cx="901" cy="301" r="3.1" fill-opacity="0.69"/><circle cx="1078" cy="351" r="3.2" fill-opacity="0.39"/><circle cx="1091" cy="366" r="3.2" fill-opacity="0.55"/><circle cx="1046" cy="342" r="3.0" fill-opacity="0.72"/><circle cx="1070" cy="356" r="2.8" fill-opacity="0.49"/><circle cx="1055" cy="344" r="3.1" fill-opacity="0.45"/><circle cx="1046" cy="351" r="2.9" fill-opacity="0.52"/><circle cx="1069" cy="364" r="3.2" fill-opacity="0.57"/><circle cx="1033" cy="355" r="3.4" fill-opacity="0.54"/><circle cx="1074" cy="344" r="2.9" fill-opacity="0.40"/><circle cx="1031" cy="342" r="2.0" fill-opacity="0.71"/><circle cx="1093" cy="360" r="2.0" fill-opacity="0.64"/><circle cx="1068" cy="336" r="3.1" fill-opacity="0.38"/><circle cx="1076" cy="350" r="2.8" fill-opacity="0.67"/><circle cx="1063" cy="371" r="2.3" fill-opacity="0.38"/><circle cx="1062" cy="367" r="3.0" fill-opacity="0.58"/><circle cx="1066" cy="363" r="3.3" fill-opacity="0.56"/><circle cx="1086" cy="405" r="3.2" fill-opacity="0.66"/><circle cx="1070" cy="373" r="2.4" fill-opacity="0.39"/><circle cx="1068" cy="351" r="2.9" fill-opacity="0.57"/><circle cx="1063" cy="364" r="2.4" fill-opacity="0.47"/><circle cx="1071" cy="398" r="2.5" fill-opacity="0.48"/><circle cx="1050" cy="364" r="2.9" fill-opacity="0.65"/><circle cx="1030" cy="519" r="3.1" fill-opacity="0.74"/><circle cx="1034" cy="507" r="2.8" fill-opacity="0.56"/><circle cx="1040" cy="498" r="3.4" fill-opacity="0.74"/><circle cx="1032" cy="503" r="2.0" fill-opacity="0.70"/><circle cx="1040" cy="515" r="3.2" fill-opacity="0.68"/><circle cx="1016" cy="519" r="2.4" fill-opacity="0.62"/><circle cx="1021" cy="516" r="2.6" fill-opacity="0.72"/><circle cx="1028" cy="512" r="3.3" fill-opacity="0.42"/><circle cx="1005" cy="511" r="2.9" fill-opacity="0.73"/><circle cx="1040" cy="508" r="2.3" fill-opacity="0.65"/><circle cx="1023" cy="520" r="2.8" fill-opacity="0.45"/><circle cx="1014" cy="508" r="2.5" fill-opacity="0.58"/><circle cx="1017" cy="517" r="2.6" fill-opacity="0.71"/><circle cx="1022" cy="514" r="2.4" fill-opacity="0.71"/><circle cx="1209" cy="594" r="2.4" fill-opacity="0.73"/><circle cx="1240" cy="558" r="3.1" fill-opacity="0.41"/><circle cx="1212" cy="568" r="2.5" fill-opacity="0.49"/><circle cx="1192" cy="570" r="2.1" fill-opacity="0.67"/><circle cx="1210" cy="586" r="2.6" fill-opacity="0.74"/><circle cx="1258" cy="586" r="3.3" fill-opacity="0.72"/><circle cx="1263" cy="570" r="2.9" fill-opacity="0.38"/><circle cx="1211" cy="566" r="2.9" fill-opacity="0.35"/><circle cx="1246" cy="552" r="2.6" fill-opacity="0.54"/><circle cx="1254" cy="582" r="2.2" fill-opacity="0.62"/><circle cx="1199" cy="581" r="2.6" fill-opacity="0.73"/><circle cx="1218" cy="563" r="2.5" fill-opacity="0.73"/><circle cx="1209" cy="561" r="2.8" fill-opacity="0.62"/><circle cx="1264" cy="552" r="2.5" fill-opacity="0.64"/><circle cx="1223" cy="585" r="3.0" fill-opacity="0.39"/><circle cx="1205" cy="558" r="2.4" fill-opacity="0.40"/><circle cx="565" cy="441" r="3.1" fill-opacity="0.41"/><circle cx="573" cy="459" r="2.1" fill-opacity="0.41"/><circle cx="618" cy="420" r="3.2" fill-opacity="0.55"/><circle cx="622" cy="427" r="2.0" fill-opacity="0.68"/><circle cx="607" cy="468" r="2.2" fill-opacity="0.52"/><circle cx="624" cy="408" r="2.1" fill-opacity="0.72"/><circle cx="670" cy="483" r="2.8" fill-opacity="0.64"/><circle cx="631" cy="437" r="2.3" fill-opacity="0.61"/><circle cx="613" cy="454" r="2.1" fill-opacity="0.47"/><circle cx="575" cy="462" r="2.7" fill-opacity="0.46"/><circle cx="652" cy="440" r="2.4" fill-opacity="0.51"/><circle cx="566" cy="480" r="3.3" fill-opacity="0.57"/><circle cx="670" cy="442" r="3.0" fill-opacity="0.39"/><circle cx="612" cy="448" r="2.6" fill-opacity="0.61"/><circle cx="601" cy="452" r="2.3" fill-opacity="0.55"/><circle cx="611" cy="441" r="2.1" fill-opacity="0.45"/><circle cx="644" cy="409" r="2.7" fill-opacity="0.75"/><circle cx="632" cy="459" r="3.2" fill-opacity="0.74"/><circle cx="607" cy="429" r="3.1" fill-opacity="0.36"/><circle cx="616" cy="418" r="2.8" fill-opacity="0.64"/><circle cx="661" cy="439" r="3.0" fill-opacity="0.38"/><circle cx="638" cy="477" r="2.9" fill-opacity="0.55"/><circle cx="621" cy="431" r="2.3" fill-opacity="0.43"/><circle cx="653" cy="440" r="2.1" fill-opacity="0.60"/><circle cx="658" cy="452" r="2.3" fill-opacity="0.73"/><circle cx="583" cy="439" r="2.7" fill-opacity="0.42"/><circle cx="593" cy="411" r="2.3" fill-opacity="0.37"/><circle cx="636" cy="453" r="2.4" fill-opacity="0.73"/><circle cx="611" cy="435" r="3.4" fill-opacity="0.61"/><circle cx="616" cy="460" r="3.1" fill-opacity="0.47"/><circle cx="979" cy="109" r="2.2" fill-opacity="0.65"/><circle cx="966" cy="114" r="2.1" fill-opacity="0.50"/><circle cx="977" cy="45" r="2.1" fill-opacity="0.52"/><circle cx="989" cy="113" r="2.3" fill-opacity="0.38"/><circle cx="988" cy="141" r="3.1" fill-opacity="0.43"/><circle cx="979" cy="32" r="2.3" fill-opacity="0.48"/><circle cx="1000" cy="36" r="2.2" fill-opacity="0.64"/><circle cx="980" cy="66" r="2.1" fill-opacity="0.69"/><circle cx="1001" cy="149" r="2.8" fill-opacity="0.38"/><circle cx="978" cy="115" r="3.2" fill-opacity="0.65"/><circle cx="954" cy="158" r="2.7" fill-opacity="0.53"/><circle cx="968" cy="133" r="2.9" fill-opacity="0.73"/><circle cx="992" cy="76" r="2.0" fill-opacity="0.59"/><circle cx="966" cy="156" r="2.8" fill-opacity="0.64"/><circle cx="980" cy="53" r="3.0" fill-opacity="0.53"/><circle cx="926" cy="67" r="2.5" fill-opacity="0.64"/><circle cx="959" cy="73" r="2.1" fill-opacity="0.66"/><circle cx="979" cy="140" r="3.2" fill-opacity="0.38"/><circle cx="682" cy="288" r="2.3" fill-opacity="0.36"/><circle cx="722" cy="277" r="2.4" fill-opacity="0.59"/><circle cx="743" cy="286" r="2.8" fill-opacity="0.71"/><circle cx="778" cy="285" r="2.5" fill-opacity="0.46"/><circle cx="769" cy="286" r="2.8" fill-opacity="0.49"/><circle cx="656" cy="291" r="2.4" fill-opacity="0.35"/><circle cx="777" cy="257" r="3.2" fill-opacity="0.53"/><circle cx="776" cy="236" r="2.7" fill-opacity="0.61"/><circle cx="652" cy="285" r="3.4" fill-opacity="0.72"/><circle cx="749" cy="265" r="3.2" fill-opacity="0.60"/><circle cx="774" cy="233" r="3.1" fill-opacity="0.40"/><circle cx="654" cy="295" r="2.3" fill-opacity="0.59"/><circle cx="724" cy="287" r="2.1" fill-opacity="0.52"/><circle cx="689" cy="295" r="2.9" fill-opacity="0.43"/><circle cx="758" cy="261" r="2.3" fill-opacity="0.47"/><circle cx="768" cy="245" r="2.6" fill-opacity="0.38"/><circle cx="883" cy="446" r="2.5" fill-opacity="0.59"/><circle cx="809" cy="443" r="2.1" fill-opacity="0.58"/><circle cx="893" cy="449" r="2.3" fill-opacity="0.55"/><circle cx="856" cy="440" r="2.3" fill-opacity="0.60"/><circle cx="836" cy="443" r="3.0" fill-opacity="0.74"/><circle cx="805" cy="447" r="3.2" fill-opacity="0.72"/><circle cx="891" cy="443" r="3.4" fill-opacity="0.47"/><circle cx="814" cy="443" r="2.3" fill-opacity="0.45"/><circle cx="893" cy="442" r="2.1" fill-opacity="0.61"/><circle cx="894" cy="444" r="2.3" fill-opacity="0.53"/></g>
</g>
<circle cx="828" cy="285" r="5.5" fill="#ff2020" filter="url(#bl3)"/>
<circle cx="1097" cy="310" r="5" fill="none" stroke="#a01010" stroke-width="2.5" filter="url(#bl3)"/><circle cx="1000" cy="128" r="5" fill="none" stroke="#901010" stroke-width="2.5" filter="url(#bl3)"/>
<g fill="#0000ff"><polygon points="774.3,195.9 773.6,202.1 772.4,208.2 770.8,214.2 768.8,220.0 766.5,225.6 763.8,231.1 760.7,236.3 757.4,241.3 753.7,246.0 749.8,250.5 745.7,254.7 741.3,258.7 736.7,262.4 731.9,265.8 727.0,268.9 721.8,271.8 716.5,274.4 711.0,276.6 705.4,278.6 699.7,280.2 693.8,281.5 687.8,282.5 681.8,283.1 675.6,283.4 669.4,283.2 663.2,282.6 656.9,281.7 650.7,280.3 644.6,278.4 638.5,276.1 632.6,273.4 626.8,270.1 621.3,266.5 616.0,262.3 611.1,257.8 606.5,252.8 602.3,247.5 598.6,241.8 595.4,235.7 592.7,229.5 590.5,223.0 588.9,216.3 587.9,209.5 587.5,202.7 587.7,195.9 588.5,189.2 589.8,182.6 591.6,176.1 594.0,169.9 596.8,163.9 600.1,158.2 603.7,152.8 607.7,147.7 611.9,143.0 616.4,138.6 621.2,134.5 626.1,130.7 631.2,127.3 636.4,124.2 641.8,121.4 647.3,118.9 652.8,116.7 658.5,114.8 664.2,113.2 670.0,111.9 675.9,110.8 681.8,110.1 687.8,109.8 693.9,109.8 699.9,110.1 706.0,110.9 712.1,112.0 718.1,113.6 724.0,115.7 729.7,118.1 735.3,121.1 740.7,124.4 745.8,128.2 750.6,132.4 755.0,137.0 759.0,142.0 762.7,147.3 765.8,152.8 768.5,158.6 770.7,164.6 772.5,170.8 773.7,177.0 774.4,183.3 774.6,189.6"/>
<polygon points="935.1,170.2 934.6,176.0 933.8,181.7 932.7,187.4 931.2,193.0 929.5,198.5 927.4,203.9 925.1,209.2 922.4,214.3 919.3,219.3 915.9,224.1 912.2,228.6 908.2,232.9 903.9,236.9 899.2,240.6 894.3,243.9 889.1,246.9 883.8,249.4 878.2,251.5 872.5,253.2 866.6,254.5 860.7,255.4 854.7,255.8 848.8,255.7 842.8,255.3 836.9,254.5 831.0,253.3 825.3,251.8 819.6,249.9 814.0,247.6 808.6,245.0 803.3,242.1 798.2,238.8 793.3,235.2 788.6,231.2 784.2,226.9 780.0,222.3 776.2,217.4 772.8,212.2 769.8,206.7 767.2,201.0 765.1,195.1 763.5,189.0 762.5,182.7 762.0,176.5 762.1,170.2 762.7,164.0 763.8,157.8 765.5,151.9 767.7,146.1 770.2,140.5 773.2,135.2 776.6,130.2 780.2,125.5 784.1,121.1 788.3,116.9 792.6,113.1 797.1,109.5 801.7,106.1 806.4,103.0 811.3,100.2 816.3,97.5 821.4,95.1 826.7,93.0 832.0,91.0 837.5,89.4 843.1,88.0 848.8,86.9 854.7,86.3 860.6,86.0 866.6,86.1 872.6,86.7 878.5,87.7 884.4,89.3 890.2,91.4 895.8,94.0 901.1,97.0 906.2,100.6 910.9,104.5 915.2,108.9 919.2,113.6 922.7,118.7 925.8,124.0 928.4,129.5 930.6,135.1 932.3,140.9 933.7,146.7 934.6,152.6 935.1,158.5 935.3,164.4"/>
<polygon points="1077.5,247.1 1076.2,253.0 1074.4,258.6 1072.4,264.1 1070.0,269.4 1067.5,274.5 1064.7,279.4 1061.8,284.1 1058.8,288.7 1055.6,293.1 1052.3,297.5 1048.9,301.8 1045.2,306.0 1041.4,310.1 1037.4,314.1 1033.1,317.9 1028.5,321.5 1023.6,324.9 1018.5,327.9 1013.0,330.5 1007.3,332.7 1001.4,334.4 995.3,335.5 989.1,335.9 982.9,335.8 976.7,335.0 970.6,333.6 964.8,331.6 959.1,329.0 953.8,325.9 948.7,322.4 944.0,318.5 939.7,314.3 935.7,309.8 932.1,305.2 928.7,300.4 925.6,295.5 922.8,290.5 920.1,285.4 917.7,280.3 915.4,275.0 913.3,269.7 911.4,264.3 909.7,258.7 908.2,253.0 907.0,247.1 906.2,241.1 905.7,234.9 905.7,228.7 906.2,222.4 907.2,216.2 908.8,210.0 911.0,203.9 913.8,198.1 917.1,192.5 921.0,187.4 925.4,182.6 930.3,178.3 935.5,174.5 941.1,171.2 946.8,168.5 952.8,166.2 958.8,164.5 965.0,163.2 971.1,162.3 977.2,161.8 983.2,161.7 989.2,161.8 995.2,162.2 1001.1,162.9 1006.9,163.8 1012.7,164.9 1018.5,166.3 1024.2,168.0 1029.8,169.9 1035.4,172.2 1040.9,174.9 1046.2,178.0 1051.3,181.4 1056.2,185.3 1060.7,189.6 1064.8,194.3 1068.5,199.4 1071.6,204.9 1074.2,210.6 1076.2,216.5 1077.6,222.6 1078.4,228.8 1078.7,234.9 1078.3,241.1"/>
<polygon points="649.1,326.2 648.3,331.8 647.3,337.2 645.9,342.6 644.3,347.8 642.4,352.9 640.2,357.9 637.7,362.8 635.0,367.5 632.0,372.0 628.7,376.4 625.2,380.5 621.4,384.5 617.3,388.1 613.0,391.5 608.4,394.6 603.7,397.4 598.7,399.9 593.5,402.0 588.3,403.7 582.8,405.2 577.3,406.2 571.7,406.9 566.1,407.3 560.4,407.3 554.7,407.0 549.0,406.3 543.2,405.3 537.5,404.0 531.8,402.3 526.2,400.3 520.6,397.9 515.1,395.1 509.8,391.9 504.6,388.3 499.7,384.3 495.0,379.9 490.7,375.1 486.8,369.9 483.3,364.3 480.4,358.4 478.0,352.3 476.2,345.9 475.1,339.4 474.6,332.8 474.8,326.2 475.7,319.7 477.2,313.3 479.3,307.2 482.0,301.3 485.2,295.7 488.8,290.5 492.8,285.7 497.0,281.3 501.6,277.3 506.2,273.6 511.0,270.3 515.9,267.3 520.8,264.6 525.7,262.1 530.6,259.9 535.6,257.8 540.5,255.9 545.5,254.1 550.6,252.6 555.7,251.1 560.9,249.9 566.2,248.9 571.7,248.1 577.2,247.7 582.8,247.5 588.5,247.8 594.2,248.5 599.9,249.7 605.5,251.3 610.9,253.5 616.2,256.1 621.2,259.3 626.0,262.9 630.3,266.9 634.3,271.4 637.8,276.2 640.9,281.3 643.5,286.6 645.6,292.1 647.2,297.7 648.4,303.4 649.2,309.2 649.5,314.9 649.5,320.6"/>
<polygon points="822.2,392.4 822.0,398.6 821.4,404.8 820.2,411.0 818.6,417.0 816.5,422.9 813.9,428.6 810.9,434.0 807.5,439.2 803.7,444.0 799.6,448.6 795.2,452.8 790.5,456.7 785.5,460.2 780.4,463.3 775.1,466.0 769.6,468.3 764.0,470.3 758.4,471.9 752.7,473.0 746.9,473.8 741.2,474.2 735.4,474.3 729.7,473.9 724.1,473.2 718.5,472.1 713.0,470.7 707.7,468.9 702.5,466.7 697.5,464.2 692.7,461.4 688.1,458.3 683.7,454.9 679.5,451.3 675.6,447.3 672.0,443.2 668.6,438.8 665.5,434.2 662.8,429.5 660.3,424.5 658.1,419.5 656.2,414.3 654.6,408.9 653.3,403.5 652.3,398.0 651.7,392.4 651.4,386.7 651.5,381.0 652.0,375.2 652.8,369.5 654.0,363.8 655.6,358.1 657.7,352.5 660.1,347.1 663.0,341.8 666.2,336.7 669.9,331.9 674.0,327.3 678.4,323.1 683.2,319.2 688.3,315.7 693.7,312.6 699.3,310.0 705.1,307.8 711.0,306.1 717.1,304.9 723.3,304.1 729.5,303.8 735.6,304.0 741.8,304.6 747.8,305.7 753.8,307.1 759.6,309.0 765.3,311.2 770.9,313.8 776.2,316.7 781.4,320.0 786.3,323.5 791.0,327.4 795.5,331.6 799.7,336.0 803.6,340.7 807.2,345.7 810.5,350.9 813.4,356.3 816.0,362.0 818.1,367.8 819.8,373.8 821.1,379.9 821.9,386.1"/>
<polygon points="1061.5,416.8 1063.1,422.8 1064.4,429.1 1065.2,435.6 1065.4,442.2 1065.0,448.8 1063.9,455.5 1062.2,462.1 1059.8,468.5 1056.7,474.7 1052.9,480.5 1048.6,485.9 1043.7,490.8 1038.4,495.3 1032.6,499.2 1026.6,502.6 1020.3,505.5 1013.9,507.9 1007.3,509.8 1000.6,511.3 993.9,512.3 987.2,512.9 980.4,513.2 973.7,513.0 967.0,512.5 960.4,511.6 953.8,510.2 947.3,508.5 940.9,506.3 934.7,503.6 928.8,500.5 923.1,496.8 917.8,492.7 912.9,488.1 908.5,483.0 904.7,477.5 901.5,471.7 898.9,465.7 896.9,459.4 895.7,453.1 895.0,446.7 894.9,440.4 895.4,434.2 896.3,428.2 897.6,422.4 899.2,416.8 901.0,411.5 902.9,406.4 904.9,401.5 906.9,396.7 908.9,392.0 910.9,387.4 912.9,382.7 914.9,378.0 916.9,373.1 919.1,368.2 921.6,363.2 924.3,358.2 927.3,353.2 930.8,348.2 934.7,343.4 939.0,338.9 943.9,334.7 949.2,331.1 954.9,328.0 961.0,325.6 967.3,324.0 973.8,323.1 980.3,323.1 986.8,323.8 993.2,325.4 999.3,327.7 1005.1,330.6 1010.5,334.1 1015.5,338.1 1020.0,342.4 1024.2,347.0 1027.9,351.8 1031.3,356.6 1034.4,361.5 1037.3,366.3 1040.0,371.1 1042.6,375.9 1045.1,380.6 1047.6,385.4 1050.1,390.2 1052.6,395.2 1055.0,400.3 1057.4,405.5 1059.6,411.1"/>
<polygon points="942.8,518.5 942.3,525.0 941.3,531.5 939.8,537.8 937.7,544.0 935.3,550.0 932.4,555.7 929.1,561.2 925.5,566.4 921.6,571.3 917.3,576.0 912.8,580.3 908.0,584.3 903.0,587.9 897.8,591.2 892.4,594.1 886.9,596.6 881.2,598.7 875.4,600.3 869.5,601.6 863.6,602.4 857.7,602.9 851.8,602.9 845.9,602.5 840.1,601.7 834.3,600.5 828.7,599.0 823.2,597.2 817.9,595.1 812.6,592.7 807.5,590.0 802.6,587.1 797.7,583.9 793.0,580.5 788.4,576.8 784.0,572.9 779.7,568.7 775.7,564.2 771.8,559.4 768.2,554.4 764.9,549.0 762.0,543.4 759.4,537.5 757.4,531.3 755.9,525.0 754.9,518.5 754.6,511.9 754.9,505.3 755.9,498.7 757.6,492.3 759.9,486.1 762.9,480.2 766.5,474.7 770.5,469.6 775.1,464.9 780.0,460.8 785.3,457.1 790.8,454.0 796.4,451.4 802.1,449.3 807.9,447.6 813.6,446.2 819.2,445.3 824.8,444.6 830.3,444.1 835.6,443.8 840.9,443.6 846.2,443.6 851.4,443.6 856.7,443.8 861.9,444.1 867.3,444.5 872.7,445.1 878.1,445.9 883.7,447.0 889.3,448.4 894.9,450.2 900.4,452.4 905.9,455.1 911.2,458.2 916.3,461.8 921.1,465.9 925.6,470.5 929.6,475.5 933.2,480.9 936.3,486.6 938.7,492.7 940.6,499.0 941.9,505.4 942.7,511.9"/>
<polygon points="1205.8,494.4 1206.9,500.2 1207.5,506.0 1207.5,512.0 1206.8,517.9 1205.7,523.8 1203.9,529.5 1201.5,535.1 1198.7,540.4 1195.3,545.4 1191.5,550.1 1187.3,554.5 1182.7,558.4 1177.9,562.0 1172.8,565.1 1167.5,567.9 1162.1,570.2 1156.5,572.1 1150.9,573.7 1145.2,574.8 1139.4,575.6 1133.7,575.9 1128.0,575.9 1122.3,575.5 1116.7,574.7 1111.2,573.5 1105.8,571.9 1100.6,570.0 1095.5,567.6 1090.7,565.0 1086.1,562.0 1081.8,558.7 1077.7,555.1 1073.9,551.3 1070.4,547.3 1067.2,543.1 1064.2,538.7 1061.4,534.2 1058.9,529.7 1056.6,525.0 1054.4,520.2 1052.5,515.3 1050.7,510.3 1049.0,505.1 1047.6,499.9 1046.3,494.4 1045.2,488.9 1044.5,483.1 1044.0,477.2 1043.8,471.1 1044.1,465.0 1044.9,458.7 1046.2,452.5 1048.0,446.3 1050.5,440.2 1053.5,434.4 1057.2,428.9 1061.5,423.7 1066.3,419.1 1071.6,415.1 1077.4,411.8 1083.5,409.1 1089.9,407.2 1096.4,406.0 1103.0,405.6 1109.5,405.9 1115.9,406.8 1122.1,408.4 1128.0,410.5 1133.7,413.0 1139.0,415.9 1143.9,419.1 1148.5,422.4 1152.8,425.9 1156.9,429.4 1160.7,432.9 1164.3,436.4 1167.8,439.8 1171.2,443.2 1174.6,446.7 1177.9,450.1 1181.3,453.6 1184.6,457.3 1187.9,461.1 1191.1,465.1 1194.2,469.3 1197.1,473.8 1199.8,478.6 1202.2,483.6 1204.2,488.9"/></g>
</g>
</svg></div>
<svg class="a" style="left:470px;top:399px" width="18" height="22"><path d="M3 3 V17.5 L6.3 14.3 L9 19.5 L11.3 18.5 L8.8 13.5 L13.5 13.5 Z" fill="#f4f4f4" stroke="#000" stroke-width="1"/></svg>
<!-- h scrollbar -->
<div class="a" style="left:363px;top:620px;width:952px;height:32px;background:#454d62"></div>
<div class="a" style="left:370px;top:620px;width:17px;height:10px;border-radius:5px 0 0 5px;background:linear-gradient(#7d8498,#50576b)"></div>
<svg class="a" style="left:373px;top:621px" width="10" height="9"><path d="M2 4.5 L7 1.5 V7.5Z" fill="#dfe2ea"/></svg>
<div class="a" style="left:387px;top:620px;width:24px;height:10px;background:#2e3343"></div>
<div class="a" style="left:411px;top:620px;width:904px;height:10px;border-radius:5px 0 0 5px;background:linear-gradient(#7e8599,#5d6478 50%,#4d5468)"></div>
<svg class="a" style="left:1091px;top:622px" width="19" height="6"><g stroke="#a3a9b8"><path d="M0.5 0 V6 M4.5 0 V6 M8.5 0 V6 M12.5 0 V6 M16.5 0 V6"/></g></svg>
<div class="a" style="left:363px;top:630px;width:952px;height:1px;background:#262a38"></div>
<svg class="a" style="left:1132px;top:639px" width="16" height="9"><path d="M1 1 H15 L8 8Z" fill="#3c4254" stroke="#2a2f3e"/></svg>
<div class="a" style="left:1175px;top:637px;width:51px;height:16px;border:1px solid #22273a;border-bottom:none;border-radius:6px 6px 0 0;background:#3f4558"></div>
<svg class="a" style="left:1179px;top:640px" width="10" height="11"><path d="M1 6 L3.5 9 L8.5 1.5" fill="none" stroke="#e8eaf0" stroke-width="1.6"/></svg><div class="t" style="left:1187px;top:638px;font-size:10px;color:#e8eaf0;letter-spacing:-0.5px">Show All</div>

<!-- BOTTOM DIMENSIONS PANEL -->
<div class="a" style="left:362px;top:652px;width:953px;height:1px;background:#1c2030"></div>
<div class="a" style="left:362px;top:653px;width:433px;height:155px;background:#454d62"></div>
<div class="a" style="left:362px;top:653px;width:433px;height:19px;background:linear-gradient(#2f3548,#3b4155);border-bottom:1px solid #596075"></div>
<div class="a" style="left:363px;top:654px;width:69px;height:19px;background:#4a5166;border-radius:4px 4px 0 0"></div>
<div class="t" style="left:367px;top:657px;color:#dfe3ec">Dimensions</div>
<div class="a" style="left:432px;top:654px;width:46px;height:18px;background:#3d4356;border-right:1px solid #2a2f3e"></div>
<div class="t" style="left:436px;top:657px;color:#9ca2b2">Display</div>
<svg class="a" style="left:782px;top:659px" width="12" height="8"><path d="M1 1 H10 L5.5 6Z" fill="#7e8597"/></svg>

<div class="t lab" style="left:372px;top:693px">Zoom</div>
<div class="btn" style="left:424px;top:692px;width:137px;height:18px"></div>
<div class="a" style="left:457px;top:693px;width:1px;height:16px;background:#1b1f2b"></div>
<div class="a" style="left:491px;top:693px;width:1px;height:16px;background:#1b1f2b"></div>
<div class="a" style="left:525px;top:693px;width:1px;height:16px;background:#1b1f2b"></div>
<svg class="a" style="left:424px;top:692px" width="137" height="18">
<g fill="none" stroke="#c8ccd4" stroke-width="1.1"><rect x="13.5" y="5.5" width="8" height="5"/></g>
<g fill="#c8ccd4"><path d="M10 8 L13 6 V10Z M25 8 L22 6 V10Z M17.5 1 L15.5 3.5 H19.5Z M17.5 14.5 L15.5 12 H19.5Z"/></g>
<text x="40" y="11" font-family="Liberation Sans" font-size="8.6" fill="#e6e8ef" letter-spacing="-0.4">100%</text>
<g fill="none" stroke="#d0d3db" stroke-width="1.1"><circle cx="83" cy="7" r="3.9"/><path d="M85.8 9.8 L91 14.7 M81 7 H85"/><circle cx="117.3" cy="7" r="3.9"/><path d="M120.1 9.8 L125.3 14.7 M115.3 7 H119.3 M117.3 5 V9"/></g>
</svg>
<div class="a" style="left:570px;top:699px;width:83px;height:2px;background:#0c0e14"></div>
<div class="a" style="left:613px;top:693px;width:6px;height:16px;border-radius:3px;background:linear-gradient(90deg,#7b8296,#4a5164);border:1px solid #1a1d28"></div>
<div class="spin" style="left:660px;top:693px;width:62px;height:17px;background:#505769"><span class="t" style="right:18px;top:1px">118 %</span><b></b></div>
<div class="cb" style="left:730px;top:694px;background:#3f4557"></div>
<div class="t" style="left:745px;top:693px">Auto Fit</div>

<div class="t lab" style="left:372px;top:720px">Tools</div>
<div class="btn" style="left:424px;top:719px;width:137px;height:17px"></div>
<div class="a" style="left:457px;top:720px;width:1px;height:15px;background:#1b1f2b"></div>
<div class="a" style="left:491px;top:720px;width:1px;height:15px;background:#1b1f2b"></div>
<div class="a" style="left:525px;top:720px;width:1px;height:15px;background:#1b1f2b"></div>
<svg class="a" style="left:424px;top:719px" width="137" height="17">
<path d="M15 2.5 V11 L17 9.3 L18.6 12.5 L19.8 11.9 L18.3 8.8 L21 8.6Z" fill="#c8ccd4"/>
<g fill="none" stroke="#e0e3ea" stroke-width="1.1"><circle cx="46.2" cy="5.9" r="3.3"/><path d="M48.6 8.3 L51.2 11.2"/><rect x="54" y="6" width="5.5" height="5.8"/></g>
<path d="M83.5 13 C82 11 80.8 9.5 81.2 8.2 L82.5 8.8 V3.5 M84.5 8 V2.2 M86.5 8 V2 M88.5 8 V2.8 M90.2 8.5 V4.5 V10 C90.2 12 89 13 87.5 13" fill="none" stroke="#c0c4cc" stroke-width="1.1"/>
<path d="M114.5 12.8 L121 6.3" stroke="#c8ccd4" stroke-width="2"/><path d="M120 3.8 L125.5 9.3" stroke="#c8ccd4" stroke-width="1.6"/><circle cx="123.5" cy="3.8" r="2" fill="#c8ccd4"/>
</svg>
<div class="btn blue" style="left:569px;top:719px;width:124px;height:17px;line-height:15px">Navigator</div>
<div class="cb on" style="left:704px;top:720px"></div>
<div class="t" style="left:719px;top:720px">Interpolation</div>

<div class="t lab" style="left:372px;top:754px">Channels</div>
<div class="btn" style="left:424px;top:746px;width:35px;height:27px;text-align:left;padding-left:2px;line-height:14px;border-radius:5px">DAPI</div>
<div class="a" style="left:426px;top:763px;width:20px;height:8px;background:#0000ff;border:1px solid #111"></div>
<svg class="a" style="left:447px;top:764px" width="10" height="6"><path d="M1 1 H9 L5 5Z" fill="#e0e3ea"/></svg>
<div class="a" style="left:424px;top:762px;width:35px;height:1px;background:#1b1f2b"></div>
<div class="btn" style="left:466px;top:746px;width:40px;height:27px;text-align:left;padding-left:2px;line-height:14px;border-radius:5px">mRFP1</div>
<div class="a" style="left:468px;top:763px;width:21px;height:8px;background:#ff0000;border:1px solid #111"></div>
<svg class="a" style="left:493px;top:764px" width="10" height="6"><path d="M1 1 H9 L5 5Z" fill="#e0e3ea"/></svg>
<div class="a" style="left:466px;top:762px;width:40px;height:1px;background:#1b1f2b"></div>

<div class="cb" style="left:424px;top:782px;background:#3f4557"></div>
<div class="t" style="left:439px;top:781px">Single Channel</div>
<div class="cb" style="left:546px;top:782px;background:#3f4557"></div>
<div class="t" style="left:561px;top:781px">Range Indicator</div>
<div class="btn" style="left:668px;top:781px;width:120px;height:17px;line-height:15px">Quick Color Setup</div>
<div class="sep" style="left:372px;top:804px;width:416px;background:#535a6d"></div>

<!-- BOTTOM ANALYSIS PANEL -->
<div class="a" style="left:795px;top:653px;width:1px;height:155px;background:#1c2030"></div>
<div class="a" style="left:796px;top:653px;width:519px;height:155px;background:#454d62"></div>
<div class="a" style="left:796px;top:653px;width:519px;height:19px;background:linear-gradient(#2f3548,#3b4155);border-bottom:1px solid #596075"></div>
<div class="a" style="left:796px;top:654px;width:49px;height:19px;background:#4a5166"></div>
<svg class="a" style="left:838px;top:654px" width="7" height="7"><path d="M0 0 H7 V7Z" fill="#4d7fe0"/></svg>
<div class="t" style="left:800px;top:657px;color:#dfe3ec">Analysis</div>

<div class="cb on" style="left:805px;top:695px"></div>
<div class="t" style="left:821px;top:694px">Show Objects</div>
<div class="cb on" style="left:944px;top:695px"></div>
<div class="t" style="left:958px;top:695px">Fill</div>
<div class="t lab" style="left:1051px;top:695px">Opacity</div>
<div class="a" style="left:1096px;top:700px;width:81px;height:2px;background:#0c0e14"></div>
<div class="a" style="left:1173px;top:694px;width:6px;height:16px;border-radius:3px;background:linear-gradient(90deg,#7b8296,#4a5164);border:1px solid #1a1d28"></div>
<div class="btn" style="left:1187px;top:692px;width:27px;height:21px"></div>
<svg class="a" style="left:1194px;top:696px" width="13" height="13"><g fill="none" stroke="#c8ccd6" stroke-width="1"><path d="M3 3.5 H10 M5 2 H8 M4 4 V10.5 H9 V4 M5.5 5 V9.5 M7.5 5 V9.5"/></g></svg>
<div class="cb on" style="left:805px;top:722px"></div>
<div class="t" style="left:821px;top:721px">Show All Classes</div>
<div class="btnd" style="left:1141px;top:720px;width:79px;height:17px;line-height:15px;color:#a4aab8;font-size:11.5px;letter-spacing:-0.2px">Create Tables</div>

<div class="a" style="left:805px;top:740px;width:416px;height:70px;background:#454d62;border:1px solid #1c202c"></div>
<div class="a" style="left:806px;top:741px;width:414px;height:18px;background:#50576b;border-bottom:1px solid #454b5e"></div>
<div class="a" style="left:820px;top:760px;width:400px;height:19px;background:#4c5367"></div>
<div class="a" style="left:834px;top:779px;width:386px;height:19px;background:linear-gradient(#8d93a5,#7a8195 50%,#6c7387)"></div>
<svg class="a" style="left:808px;top:747px" width="8" height="9"><path d="M1 8 L7 8 L7 2Z" fill="#d0d4de"/></svg>
<svg class="a" style="left:828px;top:746px" width="11" height="11"><path d="M5.5 1.5 L1.5 6 M5.5 1.5 L9.5 6 M5.5 2 V10" fill="none" stroke="#f0f2f6" stroke-width="2"/></svg>
<div class="t" style="left:848px;top:745px">Base</div>
<div class="t" style="left:1055px;top:745px">0</div>
<svg class="a" style="left:822px;top:765px" width="8" height="9"><path d="M1 8 L7 8 L7 2Z" fill="#d0d4de"/></svg>
<svg class="a" style="left:842px;top:762px" width="12" height="15"><path d="M10.5 2.5 H2 L7 7.5 L2 12.5 H10.5" fill="none" stroke="#e8141a" stroke-width="1.8"/></svg>
<div class="t" style="left:862px;top:763px">DAPI All Nuclei</div>
<div class="t" style="left:1069px;top:763px">1</div>
<div class="a" style="left:854px;top:784px;width:15px;height:11px;background:#0000ff"></div>
<div class="t" style="left:876px;top:782px;color:#fff">DAPI Individual Nı DAPI</div>
<div class="t" style="left:1083px;top:782px;color:#fff">2</div>
</body></html>
